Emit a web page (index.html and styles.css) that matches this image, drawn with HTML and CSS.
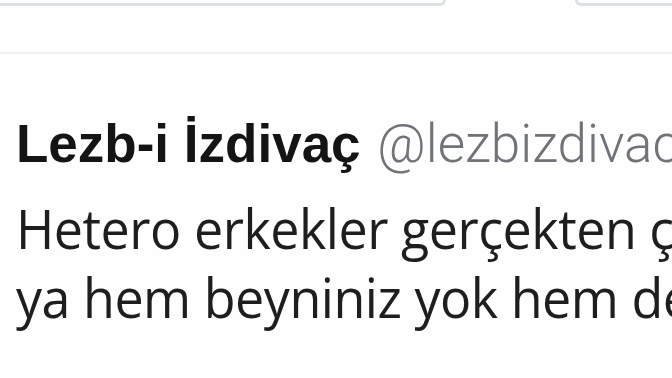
FILE: index.html
```html
<!DOCTYPE html>
<html lang="tr">
<head>
<meta charset="utf-8">
<link rel="stylesheet" href="styles.css">
</head>
<body>
<div class="page">
  <div class="topbar">
    <div class="pill pill-left"></div>
    <div class="pill pill-right"></div>
  </div>
  <div class="divider"></div>
  <div class="tweet">
    <div class="header"><span class="name">Lezb-i İzdivaç</span> <span class="handle">@lezbizdivac</span></div>
    <div class="text">
      <div class="line">Hetero erkekler gerçekten çok</div>
      <div class="line">ya hem beyniniz yok hem de</div>
    </div>
  </div>
</div>
</body>
</html>
```
FILE: styles.css
```css
html, body {
  margin: 0;
  padding: 0;
  background: #ffffff;
}
.page {
  width: 672px;
  height: 378px;
  overflow: hidden;
  background: #fefefe;
}
.topbar {
  display: flex;
  justify-content: space-between;
  height: 8px;
}
.pill {
  height: 3px;
  border-bottom: 3px solid #dde1e4;
}
.pill-left {
  width: 443px;
  border-right: 3px solid #dde1e4;
  border-bottom-right-radius: 22px;
}
.pill-right {
  width: 94px;
  border-left: 3px solid #dde1e4;
  border-bottom-left-radius: 22px;
}
.divider {
  margin-top: 44px;
  height: 2px;
  background: #eef1f2;
}
.tweet {
  padding: 60px 0 0 16px;
  white-space: nowrap;
}
.header {
  font-family: "Liberation Sans", Arial, sans-serif;
  font-size: 53px;
  line-height: 60px;
}
.name {
  font-weight: 700;
  color: #141414;
}
.handle {
  font-family: Roboto, "Liberation Sans", sans-serif;
  color: #707478;
  font-weight: 300;
  margin-left: 2px;
}
.text {
  margin-top: 19px;
  font-family: "Open Sans", "Noto Sans", sans-serif;
  font-size: 55px;
  line-height: 69px;
  color: #1e1e1e;
  letter-spacing: -0.5px;
  transform: scaleX(0.945);
  transform-origin: left top;
  width: 760px;
}
```
